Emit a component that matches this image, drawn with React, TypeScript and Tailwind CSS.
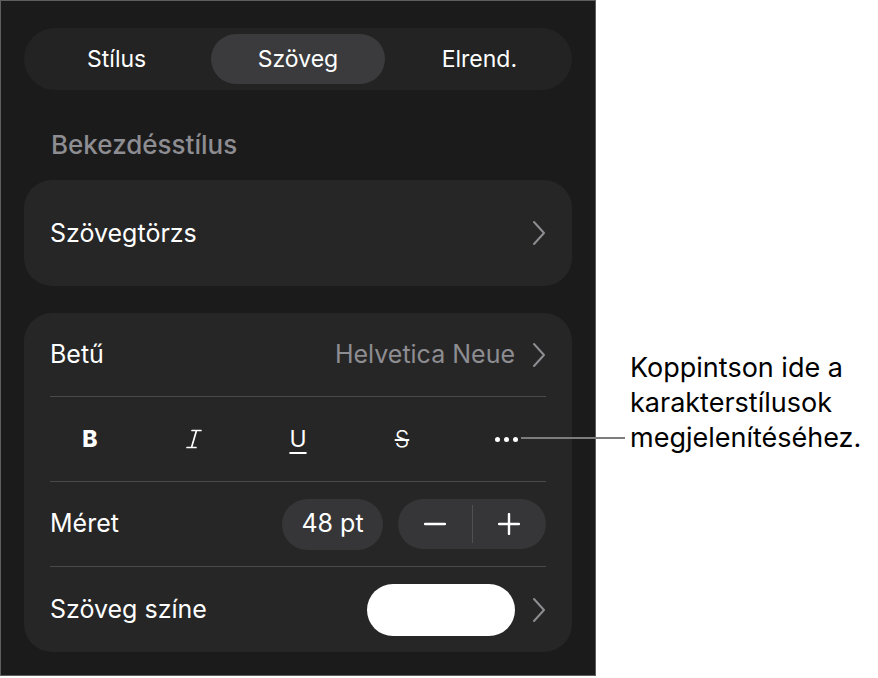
import React from 'react';

const Chevron: React.FC = () => (
  <svg width="14" height="26" viewBox="0 0 14 26" fill="none" className="shrink-0">
    <path d="M2 2 L12 13 L2 24" stroke="#8d8d92" strokeWidth="2" strokeLinecap="round" strokeLinejoin="round" />
  </svg>
);

const Divider: React.FC = () => <div className="h-px bg-[#4a4a4c]" />;

export default function App() {
  return (
    <div className="relative flex h-[678px] w-[878px] bg-white font-['Inter',sans-serif]">
      <div className="h-[676px] w-[596px] shrink-0 border border-[#5e5e5e] bg-[#1b1b1b] px-[23px] pt-[27px]">
        {/* tabs */}
        <div className="grid h-[62px] grid-cols-3 items-center gap-[8px] rounded-full bg-[#232323] px-[6px]">
          <div className="text-center text-[23px] text-white">Stílus</div>
          <div className="flex h-[50px] items-center justify-center rounded-full bg-[#3b3b3d] text-[23px] text-white">
            Szöveg
          </div>
          <div className="text-center text-[23px] text-white">Elrend.</div>
        </div>

        <div className="mt-[40px] pl-[27px] text-[26px] leading-[30px] font-medium text-[#8d8d92]">
          Bekezdésstílus
        </div>

        <div className="mt-[20px] flex h-[106px] items-center justify-between rounded-[28px] bg-[#262626] px-[26px]">
          <span className="pt-[2px] text-[25px] text-white">Szövegtörzs</span>
          <Chevron />
        </div>

        <div className="mt-[27px] rounded-[28px] bg-[#262626] px-[26px]">
          <div className="flex h-[83px] items-center justify-between">
            <span className="text-[25px] text-white">Betű</span>
            <div className="flex items-center gap-[17px]">
              <span className="text-[25px] text-[#8d8d92]">Helvetica Neue</span>
              <Chevron />
            </div>
          </div>
          <Divider />
          <div className="-mx-[12px] grid h-[84px] grid-cols-5 items-center text-white">
            <div className="flex justify-center text-[23px] font-extrabold">B</div>
            <div className="flex justify-center">
              <svg width="18" height="20" viewBox="0 0 18 20" fill="none">
                <path d="M7 1.5 H16 M2 18.5 H11 M11.5 1.5 L6.5 18.5" stroke="white" strokeWidth="1.7" strokeLinecap="round" />
              </svg>
            </div>
            <div className="flex justify-center">
              <span className="text-[23px] leading-none underline decoration-[1.6px] underline-offset-[5px]">U</span>
            </div>
            <div className="flex justify-center">
              <span className="text-[23px] leading-none font-light line-through decoration-[1.6px]">S</span>
            </div>
            <div className="flex justify-center gap-[4px]">
              <span className="h-[5px] w-[5px] rounded-full bg-white" />
              <span className="h-[5px] w-[5px] rounded-full bg-white" />
              <span className="h-[5px] w-[5px] rounded-full bg-white" />
            </div>
          </div>
          <Divider />
          <div className="flex h-[84px] items-center justify-between">
            <span className="text-[25px] text-white">Méret</span>
            <div className="flex items-center gap-[15px]">
              <div className="flex h-[51px] w-[101px] items-center justify-center rounded-full bg-[#363638] text-[25px] text-white">
                48 pt
              </div>
              <div className="flex h-[50px] w-[148px] items-center rounded-full bg-[#363638]">
                <div className="flex flex-1 justify-center">
                  <svg width="22" height="4" viewBox="0 0 22 4">
                    <path d="M1 2 H21" stroke="white" strokeWidth="2.4" strokeLinecap="round" />
                  </svg>
                </div>
                <div className="h-[38px] w-px bg-[#505052]" />
                <div className="flex flex-1 justify-center">
                  <svg width="22" height="22" viewBox="0 0 22 22">
                    <path d="M1 11 H21 M11 1 V21" stroke="white" strokeWidth="2.4" strokeLinecap="round" />
                  </svg>
                </div>
              </div>
            </div>
          </div>
          <Divider />
          <div className="flex h-[85px] items-center justify-between">
            <span className="text-[25px] text-white">Szöveg színe</span>
            <div className="flex items-center gap-[17px]">
              <div className="h-[52px] w-[148px] rounded-full bg-white" />
              <Chevron />
            </div>
          </div>
        </div>
      </div>

      <div className="pl-[34px] pt-[350px] text-[27px] leading-[35px] text-black">
        <div>Koppintson ide a</div>
        <div>karakterstílusok</div>
        <div>megjelenítéséhez.</div>
      </div>

      <div className="absolute left-[521px] top-[437px] h-[2px] w-[104px] bg-[#7d7d7d]" />
    </div>
  );
}
